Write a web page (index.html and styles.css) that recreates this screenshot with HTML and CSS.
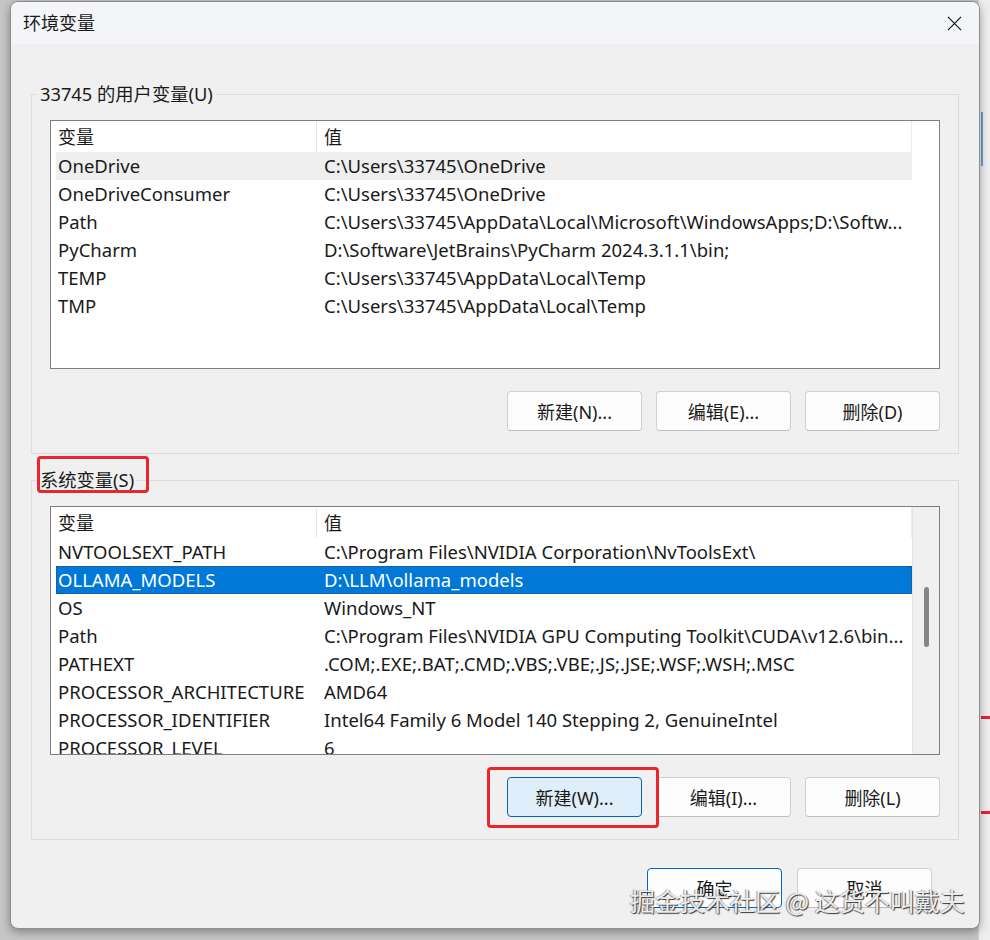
FILE: index.html
```html
<!DOCTYPE html>
<html lang="zh-CN">
<head>
<meta charset="utf-8">
<title>环境变量</title>
<link rel="stylesheet" href="styles.css">
</head>
<body>
<div class="desktop">
  <div class="behind">
    <div class="behind-blue"></div>
    <div class="behind-red red-a"></div>
    <div class="behind-red red-b"></div>
  </div>
  <div class="dialog">
    <div class="titlebar">
      <span class="title">环境变量</span>
      <svg class="close" viewBox="0 0 16 16" width="16" height="16"><path d="M1 1 L15 15 M15 1 L1 15" stroke="#1a1a1a" stroke-width="1.3" fill="none"/></svg>
    </div>
    <div class="content">
      <div class="group group-user">
        <span class="group-label">33745 的用户变量(U)</span>
        <div class="list">
          <div class="list-main">
            <div class="list-head"><span class="cell name">变量</span><span class="cell value">值</span></div>
            <div class="row hover"><span class="cell name">OneDrive</span><span class="cell value">C:\Users\33745\OneDrive</span></div>
            <div class="row"><span class="cell name">OneDriveConsumer</span><span class="cell value">C:\Users\33745\OneDrive</span></div>
            <div class="row"><span class="cell name">Path</span><span class="cell value">C:\Users\33745\AppData\Local\Microsoft\WindowsApps;D:\Softw...</span></div>
            <div class="row"><span class="cell name">PyCharm</span><span class="cell value">D:\Software\JetBrains\PyCharm 2024.3.1.1\bin;</span></div>
            <div class="row"><span class="cell name">TEMP</span><span class="cell value">C:\Users\33745\AppData\Local\Temp</span></div>
            <div class="row"><span class="cell name">TMP</span><span class="cell value">C:\Users\33745\AppData\Local\Temp</span></div>
          </div>
          <div class="list-side"></div>
        </div>
        <div class="btn-row">
          <button class="btn">新建(N)...</button>
          <button class="btn">编辑(E)...</button>
          <button class="btn">删除(D)</button>
        </div>
      </div>

      <div class="group group-sys">
        <span class="group-label">系统变量(S)</span>
        <div class="list">
          <div class="list-main">
            <div class="list-head"><span class="cell name">变量</span><span class="cell value">值</span></div>
            <div class="row"><span class="cell name">NVTOOLSEXT_PATH</span><span class="cell value">C:\Program Files\NVIDIA Corporation\NvToolsExt\</span></div>
            <div class="row selected"><span class="cell name">OLLAMA_MODELS</span><span class="cell value">D:\LLM\ollama_models</span></div>
            <div class="row"><span class="cell name">OS</span><span class="cell value">Windows_NT</span></div>
            <div class="row"><span class="cell name">Path</span><span class="cell value">C:\Program Files\NVIDIA GPU Computing Toolkit\CUDA\v12.6\bin...</span></div>
            <div class="row"><span class="cell name">PATHEXT</span><span class="cell value">.COM;.EXE;.BAT;.CMD;.VBS;.VBE;.JS;.JSE;.WSF;.WSH;.MSC</span></div>
            <div class="row"><span class="cell name">PROCESSOR_ARCHITECTURE</span><span class="cell value">AMD64</span></div>
            <div class="row"><span class="cell name">PROCESSOR_IDENTIFIER</span><span class="cell value">Intel64 Family 6 Model 140 Stepping 2, GenuineIntel</span></div>
            <div class="row"><span class="cell name">PROCESSOR_LEVEL</span><span class="cell value">6</span></div>
          </div>
          <div class="list-side scrollbar"><div class="thumb"></div></div>
        </div>
        <div class="btn-row">
          <button class="btn focused">新建(W)...</button>
          <button class="btn">编辑(I)...</button>
          <button class="btn">删除(L)</button>
        </div>
      </div>

      <div class="footer">
        <button class="btn default">确定</button>
        <button class="btn">取消</button>
      </div>
    </div>
  </div>

  <div class="mark mark-label"></div>
  <div class="mark mark-btn"></div>
  <div class="watermark">掘金技术社区 @ 这货不叫戴夫</div>
</div>
</body>
</html>
```

FILE: styles.css
```css
* { box-sizing: border-box; }
html, body { margin: 0; padding: 0; }
body {
  width: 990px;
  height: 940px;
  overflow: hidden;
  background: #c6c6c6;
  font-family: "Noto Sans", "Noto Sans CJK SC", sans-serif;
  font-size: 18px;
  color: #1a1a1a;
}
.desktop {
  position: relative;
  width: 990px;
  height: 940px;
  padding: 1px 0 0 10px;
}
.behind {
  position: absolute;
  left: 978px;
  top: 0;
  width: 12px;
  height: 940px;
  background: #eeeeee;
  border-left: 1px solid #d0d0d0;
}
.behind-blue {
  position: absolute;
  left: 2px;
  top: 112px;
  width: 2px;
  height: 54px;
  background: #6b9fd4;
}
.behind-red {
  position: absolute;
  left: 2px;
  width: 10px;
  height: 3px;
  background: #e3262a;
}
.red-a { top: 716px; }
.red-b { top: 811px; }

.dialog {
  position: relative;
  z-index: 1;
  width: 970px;
  height: 928px;
  background: #f0f0f0;
  border: 1px solid #8e8e8e;
  border-radius: 8px;
  box-shadow: 0 3px 10px rgba(0, 0, 0, 0.35);
  overflow: hidden;
}
.titlebar {
  height: 42px;
  display: flex;
  align-items: center;
  justify-content: space-between;
  padding: 0 17px 0 12px;
  background: #f3f5f8;
}
.title { font-size: 18px; line-height: 24px; }
.close { display: block; width: 15px; height: 15px; }

.content { padding: 0 20px; }
.group {
  border: 1px solid #dcdcdc;
  padding: 0 18px 22px;
}
.group-user { margin-top: 50px; }
.group-sys { margin-top: 26px; }
.group-label {
  display: block;
  width: max-content;
  margin: -13px 0 0 -13px;
  padding: 0 3px;
  line-height: 24px;
  font-size: 18.3px;
  background: #f0f0f0;
}

.list {
  margin-top: 14px;
  height: 249px;
  border: 1px solid #7f7f7f;
  background: #fff;
  display: flex;
  overflow: hidden;
  font-size: 18.5px;
}
.list-main {
  width: 861px;
  padding-left: 5px;
}
.list-side {
  width: 27px;
  background: #fff;
}
.list-side.scrollbar {
  background: #f0f0f0;
  border-left: 1px solid #e6e6e6;
  padding: 80px 0 0 11px;
}
.thumb {
  width: 5px;
  height: 60px;
  border-radius: 3px;
  background: #868686;
}
.list-head, .row {
  display: grid;
  grid-template-columns: 261px 1fr;
}
.list-head {
  height: 31px;
  align-items: center;
  border-right: 1px solid #ececec;
  font-size: 18px;
}
.list-head .cell { line-height: 30px; }
.list-head .name { border-right: 1px solid #e5e5e5; }
.row { height: 28px; line-height: 28px; }
.cell {
  white-space: nowrap;
  overflow: hidden;
}
.name { padding-left: 2px; }
.value { padding-left: 7px; }
.row.hover { background: #efefef; }
.row.selected {
  background: #0078d7;
  color: #fff;
  outline: 1px dotted #2a4d75;
  outline-offset: -1px;
}

.btn-row {
  margin-top: 22px;
  display: flex;
  justify-content: flex-end;
  gap: 14px;
}
.btn {
  width: 135px;
  height: 40px;
  font: inherit;
  font-size: 18px;
  color: #1a1a1a;
  background: #fdfdfd;
  border: 1px solid #d0d0d0;
  border-bottom-color: #bdbdbd;
  border-radius: 4px;
  padding: 0;
}
.btn.focused {
  background: #e0eef9;
  border-color: #0067c0;
}
.btn.default { border-color: #0067c0; }
.footer {
  margin-top: 28px;
  display: flex;
  justify-content: flex-end;
  gap: 15px;
  padding-right: 27px;
}

.mark {
  position: absolute;
  z-index: 2;
  border: 3px solid #e8262b;
  border-radius: 4px;
}
.mark-label { left: 37px; top: 456px; width: 112px; height: 37px; }
.mark-btn { left: 487px; top: 767px; width: 172px; height: 61px; }

.watermark {
  position: absolute;
  z-index: 3;
  left: 630px;
  top: 884px;
  font-family: "Noto Sans CJK SC", sans-serif;
  font-size: 25px;
  line-height: 32px;
  white-space: nowrap;
  color: rgba(250, 250, 250, 0.92);
  text-shadow: 1px 1px 1px rgba(40, 40, 40, 0.9), -1px 0 1px rgba(60, 60, 60, 0.5);
}
```
